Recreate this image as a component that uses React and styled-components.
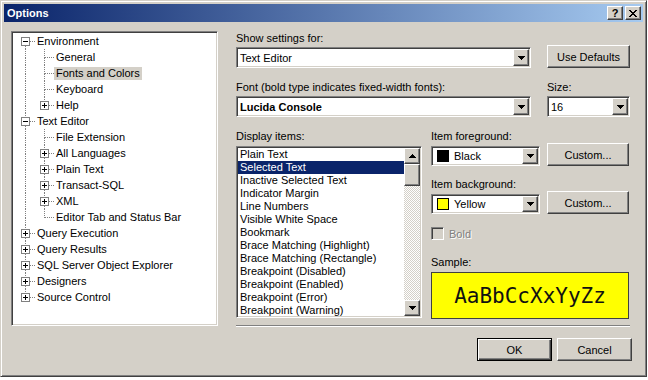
import React from "react";
import styled, { createGlobalStyle, css } from "styled-components";

const FONT = `"Liberation Sans", Arial, sans-serif`;

const GlobalStyle = createGlobalStyle`
  body {
    margin: 0;
    background: #ffffff;
    font-family: ${FONT};
    font-size: 11px;
    color: #000;
  }
`;

const sunken = css`
  box-sizing: border-box;
  border: 1px solid;
  border-color: #808080 #ffffff #ffffff #808080;
  box-shadow: inset 1px 1px #404040, inset -1px -1px #d4d0c8;
`;

const raised = css`
  box-sizing: border-box;
  border: 1px solid;
  border-color: #ffffff #404040 #404040 #ffffff;
  box-shadow: inset -1px -1px #808080;
  background: #d4d0c8;
`;

const Window = styled.div`
  width: 647px;
  height: 377px;
  box-sizing: border-box;
  background: #d4d0c8;
  border: 1px solid;
  border-color: #d4d0c8 #404040 #404040 #d4d0c8;
  box-shadow: inset 1px 1px #ffffff, inset -1px -1px #808080;
  padding: 3px;
`;

const TitleBar = styled.div`
  height: 18px;
  display: flex;
  align-items: center;
  padding: 0 2px 0 3px;
  background: linear-gradient(to right, #0a246a, #a6caf0);
  color: #fff;
  font-weight: bold;
  font-size: 11px;
`;

const TitleButtons = styled.div`
  margin-left: auto;
  display: flex;
  gap: 2px;
`;

const TitleButton = styled.div`
  ${raised};
  width: 16px;
  height: 14px;
  display: flex;
  align-items: center;
  justify-content: center;
  color: #000;
  font-weight: bold;
  font-size: 11px;
  line-height: 12px;
`;

const Body = styled.div`
  display: grid;
  grid-template-columns: 207px 396px;
  column-gap: 18px;
  row-gap: 11px;
  padding: 9px 0 0 7px;
`;

/* ---------- tree ---------- */

const TreeBox = styled.div`
  ${sunken};
  width: 207px;
  height: 295px;
  background: #fff;
  padding: 1px 0 0 4px;
  overflow: hidden;
`;

const TreeRow = styled.div`
  display: flex;
  align-items: center;
  height: 16px;
`;

const TreeLabel = styled.span`
  height: 13px;
  line-height: 13px;
  padding: 0 2px;
  white-space: nowrap;
  background: ${(p) => (p.$selected ? "#d4d0c8" : "transparent")};
`;

const Guide = ({ up, down, stub = true, box }) => (
  <svg width="19" height="16" shapeRendering="crispEdges" style={{ flex: "none" }}>
    <g stroke="#808080" strokeDasharray="1 1">
      {up && <line x1="9.5" y1="0" x2="9.5" y2={box ? 4 : 9} />}
      {down && <line x1="9.5" y1={box ? 13 : 9} x2="9.5" y2="16" />}
      {stub && <line x1={box ? 14 : 10} y1="8.5" x2="19" y2="8.5" />}
    </g>
    {box && (
      <g>
        <rect x="5.5" y="4.5" width="8" height="8" fill="#fff" stroke="#808080" />
        <line x1="7" y1="8.5" x2="12" y2="8.5" stroke="#000" />
        {box === "+" && <line x1="9.5" y1="6" x2="9.5" y2="11" stroke="#000" />}
      </g>
    )}
  </svg>
);

const tree = [
  { label: "Environment", level: 0, up: false, down: true, box: "-" },
  { label: "General", level: 1, up: true, down: true },
  { label: "Fonts and Colors", level: 1, up: true, down: true, selected: true },
  { label: "Keyboard", level: 1, up: true, down: true },
  { label: "Help", level: 1, up: true, down: false, box: "+" },
  { label: "Text Editor", level: 0, up: true, down: true, box: "-" },
  { label: "File Extension", level: 1, up: true, down: true },
  { label: "All Languages", level: 1, up: true, down: true, box: "+" },
  { label: "Plain Text", level: 1, up: true, down: true, box: "+" },
  { label: "Transact-SQL", level: 1, up: true, down: true, box: "+" },
  { label: "XML", level: 1, up: true, down: true, box: "+" },
  { label: "Editor Tab and Status Bar", level: 1, up: true, down: false },
  { label: "Query Execution", level: 0, up: true, down: true, box: "+" },
  { label: "Query Results", level: 0, up: true, down: true, box: "+" },
  { label: "SQL Server Object Explorer", level: 0, up: true, down: true, box: "+" },
  { label: "Designers", level: 0, up: true, down: true, box: "+" },
  { label: "Source Control", level: 0, up: true, down: false, box: "+" },
];

/* ---------- right side ---------- */

const Right = styled.div`
  display: flex;
  flex-direction: column;
`;

const Label = styled.div`
  height: 14px;
  line-height: 14px;
  white-space: nowrap;
`;

const Row = styled.div`
  display: flex;
  align-items: flex-end;
  gap: ${(p) => p.$gap || 16}px;
  margin-top: ${(p) => p.$mt || 0}px;
`;

const Field = styled.div`
  display: flex;
  flex-direction: column;
  gap: ${(p) => p.$gap ?? 2}px;
  width: ${(p) => p.$w}px;
`;

const Combo = styled.div`
  ${sunken};
  height: ${(p) => p.$h || 21}px;
  width: ${(p) => (p.$w ? p.$w + "px" : "auto")};
  background: #fff;
  display: flex;
  align-items: center;
  padding: 1px;
`;

const ComboText = styled.span`
  flex: 1;
  padding-left: 2px;
  font-weight: ${(p) => (p.$bold ? "bold" : "normal")};
  white-space: nowrap;
  display: flex;
  align-items: center;
`;

const Swatch = styled.span`
  width: 12px;
  height: 12px;
  box-sizing: border-box;
  border: 1px solid #000;
  background: ${(p) => p.$color};
  margin: 0 5px 0 2px;
`;

const ArrowBtn = styled.div`
  ${raised};
  width: 16px;
  height: 100%;
  display: flex;
  align-items: center;
  justify-content: center;
`;

const Arrow = ({ up }) => (
  <svg width="7" height="4" shapeRendering="crispEdges">
    <path d={up ? "M3 0h1v1h1v1h1v1h1v1H0V3h1V2h1V1h1z" : "M0 0h7v1H6v1H5v1H4v1H3V3H2V2H1V1H0z"} fill="#000" />
  </svg>
);

const Button = styled.div`
  ${raised};
  width: ${(p) => p.$w}px;
  height: 23px;
  display: flex;
  align-items: center;
  justify-content: center;
  ${(p) =>
    p.$default &&
    css`
      border-color: #000;
      box-shadow: inset 1px 1px #ffffff, inset -1px -1px #404040, inset -2px -2px #808080;
    `}
`;

const ListBox = styled.div`
  ${sunken};
  width: 186px;
  height: 172px;
  background: #fff;
  padding: 1px;
  display: flex;
`;

const Items = styled.div`
  flex: 1;
  overflow: hidden;
`;

const Item = styled.div`
  height: 13px;
  line-height: 13px;
  padding-left: 2px;
  white-space: nowrap;
  background: ${(p) => (p.$selected ? "#0a246a" : "transparent")};
  color: ${(p) => (p.$selected ? "#fff" : "#000")};
`;

const ScrollBar = styled.div`
  width: 16px;
  display: flex;
  flex-direction: column;
  background: repeating-conic-gradient(#ffffff 0 25%, #d4d0c8 0 50%) 0 0 / 2px 2px;
`;

const ScrollBtn = styled.div`
  ${raised};
  width: 16px;
  height: ${(p) => p.$h || 16}px;
  display: flex;
  align-items: center;
  justify-content: center;
  margin-top: ${(p) => (p.$end ? "auto" : "0")};
`;

const Check = styled.div`
  display: flex;
  align-items: center;
  height: 13px;
  margin-top: 13px;
`;

const CheckBox = styled.div`
  ${sunken};
  width: 13px;
  height: 13px;
  background: #d4d0c8;
`;

const Disabled = styled.span`
  margin-left: 5px;
  color: #808080;
  text-shadow: 1px 1px #ffffff;
`;

const Sample = styled.div`
  margin-top: 3px;
  width: 198px;
  height: 47px;
  box-sizing: border-box;
  border: 1px solid #404040;
  background: #ffff00;
  display: flex;
  align-items: center;
  justify-content: center;
  font-family: "DejaVu Sans Mono", "Liberation Mono", monospace;
  font-size: 21px;
  color: #111;
`;

const Separator = styled.div`
  margin-top: 6px;
  width: 394px;
  height: 2px;
  border-top: 1px solid #808080;
  border-bottom: 1px solid #ffffff;
  box-sizing: border-box;
`;

const Footer = styled.div`
  grid-column: 1 / -1;
  display: flex;
  justify-content: flex-end;
  gap: 5px;
`;

const displayItems = [
  "Plain Text",
  "Selected Text",
  "Inactive Selected Text",
  "Indicator Margin",
  "Line Numbers",
  "Visible White Space",
  "Bookmark",
  "Brace Matching (Highlight)",
  "Brace Matching (Rectangle)",
  "Breakpoint (Disabled)",
  "Breakpoint (Enabled)",
  "Breakpoint (Error)",
  "Breakpoint (Warning)",
];

const DropDown = ({ children, bold, w, h }) => (
  <Combo $w={w} $h={h}>
    <ComboText $bold={bold}>{children}</ComboText>
    <ArrowBtn>
      <Arrow />
    </ArrowBtn>
  </Combo>
);

export default function App() {
  return (
    <>
      <GlobalStyle />
      <Window>
        <TitleBar>
          Options
          <TitleButtons>
            <TitleButton>?</TitleButton>
            <TitleButton>
              <svg width="8" height="7" shapeRendering="crispEdges">
                <path d="M0 0h2v1h1v1h2V1h1V0h2v1H7v1H6v1H5v1h1v1h1v1h1v1H6V6H5V5H3v1H2v1H0V6h1V5h1V4h1V3H2V2H1V1H0z" fill="#000" />
              </svg>
            </TitleButton>
          </TitleButtons>
        </TitleBar>
        <Body>
          <TreeBox>
            {tree.map((n) => (
              <TreeRow key={n.label}>
                {n.level === 1 && <Guide up down stub={false} />}
                <Guide up={n.up} down={n.down} box={n.box} />
                <TreeLabel $selected={n.selected}>{n.label}</TreeLabel>
              </TreeRow>
            ))}
          </TreeBox>

          <Right>
            <Row>
              <Field $w={295}>
                <Label>Show settings for:</Label>
                <DropDown>Text Editor</DropDown>
              </Field>
              <Button $w={83}>Use Defaults</Button>
            </Row>
            <Row $mt={12}>
              <Field $w={295}>
                <Label>Font (bold type indicates fixed-width fonts):</Label>
                <DropDown bold>Lucida Console</DropDown>
              </Field>
              <Field $w={83}>
                <Label>Size:</Label>
                <DropDown>16</DropDown>
              </Field>
            </Row>
            <Row $mt={12} $gap={9} style={{ alignItems: "flex-start" }}>
              <Field $w={186} $gap={3}>
                <Label>Display items:</Label>
                <ListBox>
                  <Items>
                    {displayItems.map((t, i) => (
                      <Item key={t} $selected={i === 1}>
                        {t}
                      </Item>
                    ))}
                  </Items>
                  <ScrollBar>
                    <ScrollBtn>
                      <Arrow up />
                    </ScrollBtn>
                    <ScrollBtn $h={22} />
                    <ScrollBtn $end>
                      <Arrow />
                    </ScrollBtn>
                  </ScrollBar>
                </ListBox>
              </Field>
              <Field $w={199} $gap={0}>
                <Label>Item foreground:</Label>
                <Row $gap={7}>
                  <Combo $w={109} $h={20}>
                    <ComboText>
                      <Swatch $color="#000" />
                      Black
                    </ComboText>
                    <ArrowBtn>
                      <Arrow />
                    </ArrowBtn>
                  </Combo>
                  <Button $w={82}>Custom...</Button>
                </Row>
                <Label style={{ marginTop: 11 }}>Item background:</Label>
                <Row $gap={7}>
                  <Combo $w={109} $h={20}>
                    <ComboText>
                      <Swatch $color="#ffff00" />
                      Yellow
                    </ComboText>
                    <ArrowBtn>
                      <Arrow />
                    </ArrowBtn>
                  </Combo>
                  <Button $w={82}>Custom...</Button>
                </Row>
                <Check>
                  <CheckBox />
                  <Disabled>Bold</Disabled>
                </Check>
                <Label style={{ marginTop: 15 }}>Sample:</Label>
                <Sample>AaBbCcXxYyZz</Sample>
              </Field>
            </Row>
            <Separator />
          </Right>

          <Footer>
            <Button $w={75} $default>
              OK
            </Button>
            <Button $w={75}>Cancel</Button>
          </Footer>
        </Body>
      </Window>
    </>
  );
}
